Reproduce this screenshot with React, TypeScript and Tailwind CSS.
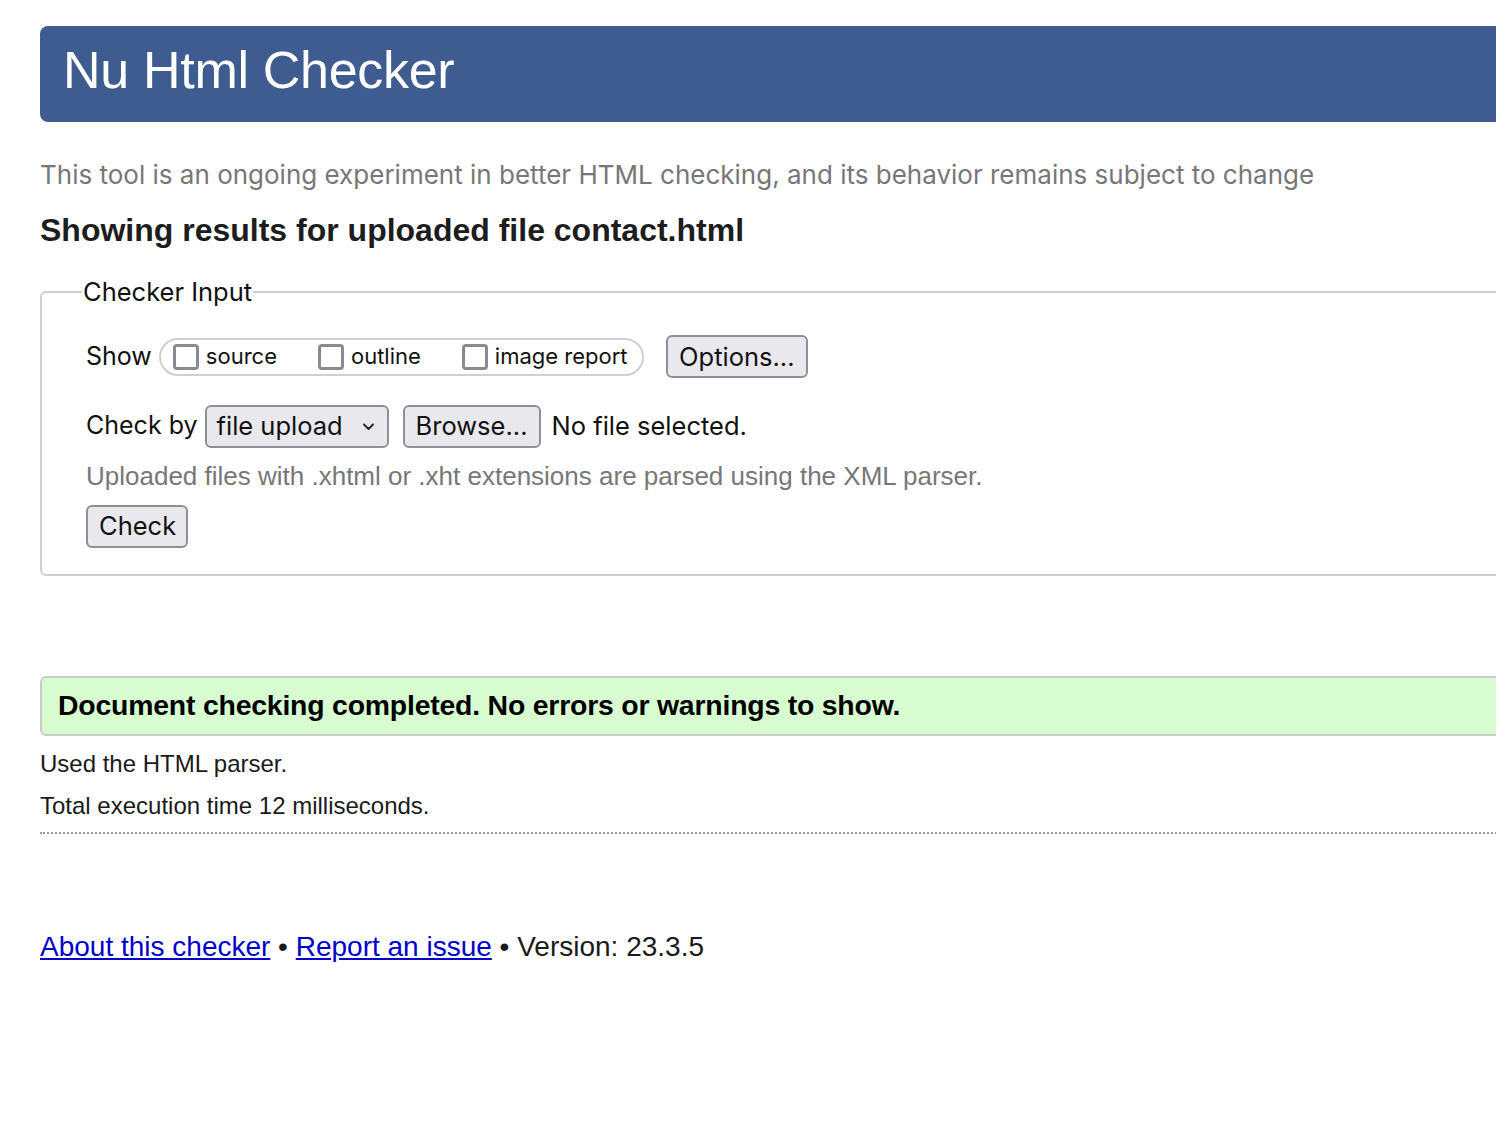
import React from "react";

const sans = "font-['Liberation_Sans',Arial,sans-serif]";
const sys = "font-['Inter','Noto_Sans',sans-serif]";

const Box: React.FC<{ label: string }> = ({ label }) => (
  <label className="flex items-center gap-[7px]">
    <span className="block w-[26px] h-[26px] rounded-[4px] border-[3px] border-[#8a8a94] bg-white" />
    <span>{label}</span>
  </label>
);

const Button: React.FC<{ children: React.ReactNode; className?: string }> = ({
  children,
  className = "",
}) => (
  <button
    className={`h-[43px] px-[11px] rounded-[6px] border-2 border-[#8f8f96] bg-[#e9e9ed] text-[25.5px] text-[#111] leading-none ${className}`}
  >
    {children}
  </button>
);

export default function App() {
  return (
    <div className={`w-full min-h-[1142px] overflow-hidden bg-white ${sans}`}>
      <div className="pl-[40px] pt-[26px] w-[1560px]">
        {/* header */}
        <div className="h-[96px] rounded-[8px] bg-[#3e5c8f] flex items-center pl-[23px] pb-[8px]">
          <h1 className="text-white text-[52px] leading-none tracking-[-0.3px]">Nu Html Checker</h1>
        </div>

        <p className={`mt-[40px] text-[#777] text-[26px] leading-none ${sys}`}>
          This tool is an ongoing experiment in better HTML checking, and its behavior remains subject to change
        </p>

        <h2 className="mt-[26px] text-[32px] font-bold text-[#1d1d1d] leading-none">
          Showing results for uploaded file contact.html
        </h2>

        {/* checker input */}
        <fieldset
          className={`mt-[33px] border-2 border-[#cfcfcf] rounded-[6px] pl-[44px] pr-4 pb-[26px] pt-[30px] ${sys} text-[#111]`}
        >
          <legend className="ml-[-4px] px-[1px] text-[25.5px] leading-none">Checker Input</legend>

          <div className="flex items-center h-[44px]">
            <span className="text-[25px]">Show</span>
            <div className="ml-[7px] h-[38px] w-[485px] rounded-full border-2 border-[#d0d0d0] flex items-center pl-[12px] gap-[41px] text-[22px]">
              <Box label="source" />
              <Box label="outline" />
              <Box label="image report" />
            </div>
            <Button className="ml-[22px] w-[142px]">Options...</Button>
          </div>

          <div className="flex items-center h-[43px] mt-[26px] text-[25.5px]">
            <span className="text-[25px]">Check by</span>
            <div className="ml-[7px] h-[43px] w-[184px] rounded-[6px] border-2 border-[#8f8f96] bg-[#e9e9ed] flex items-center justify-between pl-[10px] pr-[12px]">
              <span>file upload</span>
              <svg width="13" height="9" viewBox="0 0 13 9" fill="none">
                <path d="M2 2.5l4.5 4.5 4.5-4.5" stroke="#222" strokeWidth="1.8" strokeLinecap="round" strokeLinejoin="round" />
              </svg>
            </div>
            <Button className="ml-[14px] w-[138px]">Browse...</Button>
            <span className="ml-[11px]">No file selected.</span>
          </div>

          <p className={`mt-[15px] text-[#777] text-[26px] leading-none ${sans}`}>
            Uploaded files with .xhtml or .xht extensions are parsed using the XML parser.
          </p>

          <Button className="mt-[16px] w-[102px] h-[42px]">Check</Button>
        </fieldset>

        {/* result */}
        <div className="mt-[100px] h-[60px] rounded-[6px] border-2 border-[#cbcbcb] bg-[#d6fcd0] flex items-center pl-[16px]">
          <span className="text-[28.4px] font-bold text-black tracking-[-0.2px]">
            Document checking completed. No errors or warnings to show.
          </span>
        </div>

        <div className="text-[24px] text-[#1a1a1a] leading-none">
          <p className="mt-[16px]">Used the HTML parser.</p>
          <p className="mt-[18px]">Total execution time 12 milliseconds.</p>
        </div>
        <div className="mt-[14px] border-t-2 border-dotted border-[#9a9a9a]" />

        {/* footer */}
        <p className="mt-[99px] text-[28px] text-[#1a1a1a] leading-none">
          <a href="#" className="text-[#0000cc] underline">About this checker</a>
          {" \u2022 "}
          <a href="#" className="text-[#0000cc] underline">Report an issue</a>
          {" \u2022 Version: 23.3.5"}
        </p>
      </div>
    </div>
  );
}
